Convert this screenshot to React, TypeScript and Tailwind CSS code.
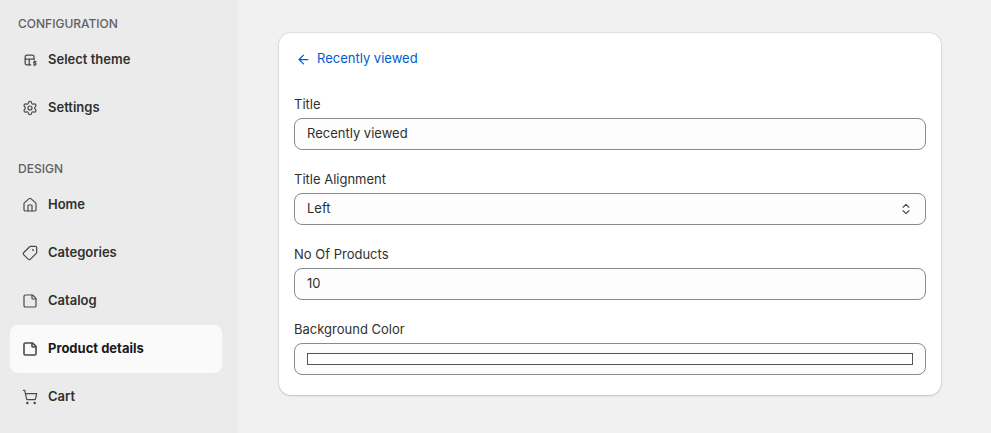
import React from 'react'
import {ArrowLeft, Settings, House, Tag, StickyNote, ShoppingCart, ChevronsUpDown} from 'lucide-react'

function ThemeIcon(){
  return (
    <svg width="18" height="18" viewBox="0 0 20 20" fill="none" stroke="#4a4a4a" strokeWidth="1.6" strokeLinecap="round">
      <path d="M11 16H6a2 2 0 0 1-2-2V6a2 2 0 0 1 2-2h7a2 2 0 0 1 2 2v3"/>
      <path d="M4 9h11M9 9v7"/>
      <path d="M17.5 12h-2a1 1 0 0 0 0 2h1a1 1 0 0 1 0 2h-2M16 11v1M16 16v1"/>
    </svg>
  )
}

function NavItem({icon,label,active=false}:{icon:React.ReactNode,label:string,active?:boolean}){
  return (
    <div className={`ml-[10px] mr-[16px] flex h-12 items-center gap-[10px] rounded-lg px-3 text-[13px] ${active ? 'bg-[#fafafa] font-bold text-[#1a1a1a]' : 'font-semibold text-[#303030]'}`}>
      <span className="flex w-4 justify-center text-[#4a4a4a]">{icon}</span>
      {label}
    </div>
  )
}

function Field({label,children}:{label:string,children:React.ReactNode}){
  return (
    <div className="mb-[19px]">
      <div className="mb-[4px] text-[13px] leading-[20px] text-[#303030]">{label}</div>
      {children}
    </div>
  )
}

const boxCls = 'flex h-8 items-center rounded-lg border border-[#8a8a8a] bg-[#fdfdfd] px-3 text-[13px] text-[#303030]'

export default function App(){
  const ic = {size:16, strokeWidth:1.8}
  return (
    <div className="flex h-[433px] w-[991px] bg-[#f1f1f1]" style={{fontFamily:'Inter, "Noto Sans", sans-serif'}}>
      <aside className="w-[238px] shrink-0 bg-[#ebebeb] pt-[14px]">
        <div className="px-[18px] text-[12px] font-medium leading-5 text-[#616161]">CONFIGURATION</div>
        <div className="mt-[2px]">
          <NavItem icon={<ThemeIcon/>} label="Select theme"/>
          <NavItem icon={<Settings {...ic}/>} label="Settings"/>
        </div>
        <div className="mt-[27px] px-[18px] text-[12px] font-medium leading-5 text-[#616161]">DESIGN</div>
        <div className="mt-[2px]">
          <NavItem icon={<House {...ic}/>} label="Home"/>
          <NavItem icon={<Tag {...ic} className="-scale-x-100"/>} label="Categories"/>
          <NavItem icon={<StickyNote {...ic}/>} label="Catalog"/>
          <NavItem icon={<StickyNote size={16} strokeWidth={2.4}/>} label="Product details" active/>
          <NavItem icon={<ShoppingCart {...ic}/>} label="Cart"/>
        </div>
      </aside>
      <main className="flex-1 pl-[41px] pt-[33px]">
        <div className="w-[662px] rounded-xl bg-white px-[15px] pb-[1px] pt-[15px] shadow-[0_1px_2px_rgba(0,0,0,0.15),0_0_0_1px_rgba(0,0,0,0.06)]">
          <div className="mt-[1px] flex h-5 items-center gap-[6px] pl-[2px] text-[13px] text-[#005bd3]">
            <ArrowLeft size={15} strokeWidth={2}/>Recently viewed
          </div>
          <div className="mt-[25px]">
            <Field label="Title"><div className={boxCls}>Recently viewed</div></Field>
            <Field label="Title Alignment">
              <div className={`${boxCls} justify-between bg-[#fafafa]`}>Left<ChevronsUpDown size={14} className="text-[#4a4a4a]"/></div>
            </Field>
            <Field label="No Of Products"><div className={boxCls}>10</div></Field>
            <Field label="Background Color">
              <div className={boxCls}><div className="h-[12px] w-full border border-[#555] bg-white"/></div>
            </Field>
          </div>
        </div>
      </main>
    </div>
  )
}
